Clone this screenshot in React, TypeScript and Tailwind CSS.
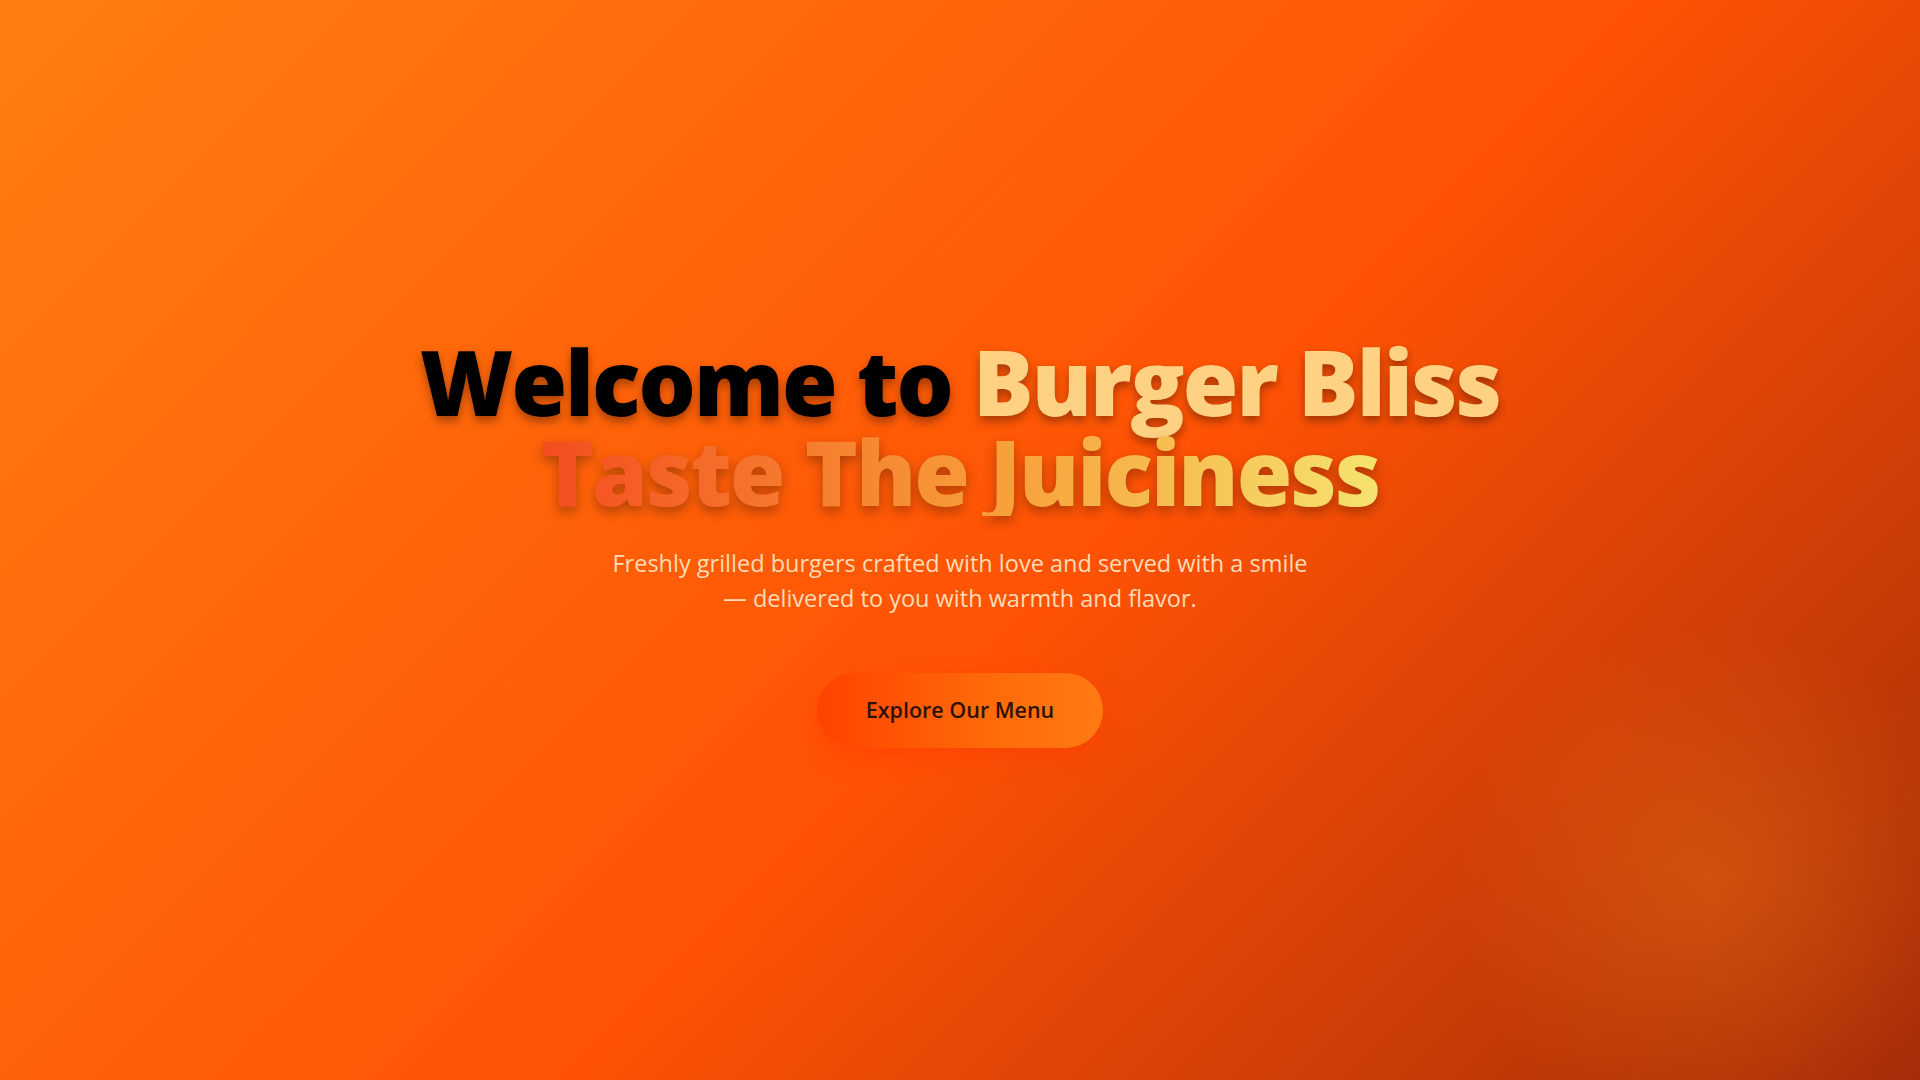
import React from "react";

export default function App() {
  return (
    <div
      className="h-screen w-full overflow-y-auto bg-[linear-gradient(135deg,#ff7e10_0%,#ff5a06_45%,#ff5205_55%,#a52d08_100%)] [&::-webkit-scrollbar]:w-[7px] [&::-webkit-scrollbar-track]:bg-transparent [&::-webkit-scrollbar-track]:my-[15px] [&::-webkit-scrollbar-thumb]:rounded-full [&::-webkit-scrollbar-thumb]:border-l-[1px] [&::-webkit-scrollbar-thumb]:border-r-[4px] [&::-webkit-scrollbar-thumb]:border-solid [&::-webkit-scrollbar-thumb]:border-transparent [&::-webkit-scrollbar-thumb]:bg-clip-content [&::-webkit-scrollbar-thumb]:bg-[#8c8c8c]"
      style={{ fontFamily: '"Open Sans", "Noto Sans", sans-serif' }}
    >
      <section className="relative h-[1080px] w-full overflow-hidden">
        <div className="pointer-events-none absolute left-[1450px] top-[620px] h-[520px] w-[520px] rounded-full bg-[radial-gradient(circle,rgba(230,110,20,0.45)_0%,rgba(230,110,20,0)_70%)]" />
        <div className="relative flex h-full flex-col items-center justify-center text-center">
          <h1 className="mt-[4px] text-[90px] font-extrabold leading-none tracking-[-2px]">
            <span className="text-black [text-shadow:0_5px_10px_rgba(0,0,0,0.35)]">Welcome to </span>
            <span className="text-[#ffd183] [text-shadow:0_5px_10px_rgba(0,0,0,0.35)]">Burger Bliss</span>
            <br />
            <span className="inline-block bg-[linear-gradient(90deg,#f44d1f_0%,#f7a03a_55%,#f6e370_100%)] bg-clip-text text-transparent [filter:drop-shadow(0_5px_6px_rgba(0,0,0,0.3))]">
              Taste The Juiciness
            </span>
          </h1>
          <p className="mt-[30px] w-[720px] text-[23.5px] leading-[35px] text-[#ffdcb5]">
            Freshly grilled burgers crafted with love and served with a smile — delivered to you with warmth and flavor.
          </p>
          <button className="mt-[57px] h-[75px] w-[286px] rounded-full bg-[linear-gradient(90deg,#ff4200_0%,#ff6a08_60%,#ff7a12_100%)] text-[21.5px] font-semibold text-[#2e1205] shadow-[0_8px_24px_rgba(255,60,0,0.6)]">
            Explore Our Menu
          </button>
        </div>
      </section>
      <section className="h-[3725px] w-full" />
    </div>
  );
}
